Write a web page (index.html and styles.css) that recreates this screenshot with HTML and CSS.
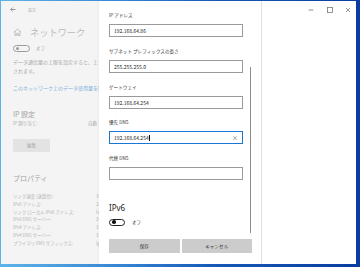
FILE: index.html
```html
<!DOCTYPE html>
<html lang="ja">
<head>
<meta charset="utf-8">
<link rel="stylesheet" href="styles.css">
</head>
<body>
<div class="window">
  <div class="main">
    <div class="titlebar">
      <svg class="back" width="6" height="5" viewBox="0 0 6 5"><path d="M5.5 2.5H0.8M2.6 0.6L0.7 2.5L2.6 4.4" fill="none" stroke="#8a8a8a" stroke-width="0.9"/></svg>
      <span class="app">設定</span>
    </div>
    <div class="page-heading">
      <svg class="home" width="9" height="8" viewBox="0 0 9 8"><path d="M1 4.2L4.5 1L8 4.2M2 3.4V7.5H3.8V5.3H5.2V7.5H7V3.4" fill="none" stroke="#a6a6a6" stroke-width="0.7"/></svg>
      <h1>ネットワーク</h1>
    </div>
    <div class="toggle-row faded">
      <span class="toggle"><span class="knob"></span></span><span class="toggle-label">オフ</span>
    </div>
    <p class="desc">データ通信量の上限を設定すると、上<br>されます。</p>
    <p class="link">このネットワーク上のデータ使用量を制</p>
    <h2 class="section">IP 設定</h2>
    <div class="ip-row"><span>IP 割り当て:</span><span class="val">自動</span></div>
    <div class="edit-btn">編集</div>
    <h2 class="section props-title">プロパティ</h2>
    <div class="props">
      <span>リンク速度 (送受信):</span><span>1000</span>
      <span>IPv6 アドレス:</span><span>2405</span>
      <span>リンク ローカル IPv6 アドレス:</span><span>fe80:</span>
      <span>IPv6 DNS サーバー:</span><span>2405</span>
      <span>IPv4 アドレス:</span><span>192.1</span>
      <span>IPv4 DNS サーバー:</span><span>192.1</span>
      <span>プライマリ DNS サフィックス:</span><span>ipent</span>
    </div>
  </div>

  <div class="dialog">
    <div class="scrollbar"></div>
    <div class="fields">
      <div class="field">
        <label>IP アドレス</label>
        <div class="input">192.168.64.86</div>
      </div>
      <div class="field">
        <label>サブネット プレフィックスの長さ</label>
        <div class="input">255.255.255.0</div>
      </div>
      <div class="field">
        <label>ゲートウェイ</label>
        <div class="input">192.168.64.254</div>
      </div>
      <div class="field">
        <label>優先 DNS</label>
        <div class="input focused"><span>192.168.64.254</span><span class="caret"></span><span class="clear">×</span></div>
      </div>
      <div class="field">
        <label>代替 DNS</label>
        <div class="input"></div>
      </div>
    </div>
    <h3 class="ipv6">IPv6</h3>
    <div class="toggle-row dark">
      <span class="toggle"><span class="knob"></span></span><span class="toggle-label">オフ</span>
    </div>
    <div class="actions">
      <div class="btn">保存</div>
      <div class="btn">キャンセル</div>
    </div>
  </div>

  <div class="side">
    <div class="controls">
      <span class="ctl"><svg width="6" height="6" viewBox="0 0 6 6"><path d="M0.5 3H5.5" stroke="#777" stroke-width="0.8"/></svg></span>
      <span class="ctl"><svg width="6" height="6" viewBox="0 0 6 6"><rect x="0.5" y="0.5" width="5" height="5" fill="none" stroke="#777" stroke-width="0.8"/></svg></span>
      <span class="ctl close"><svg width="6" height="6" viewBox="0 0 6 6"><path d="M1 1L5 5M5 1L1 5" stroke="#777" stroke-width="0.8"/></svg></span>
    </div>
  </div>
</div>
</body>
</html>
```

FILE: styles.css
```css
* { box-sizing: border-box; margin: 0; padding: 0; }
html, body { height: 100%; }
body {
  background: linear-gradient(90deg, #5db3e8 0%, #3a8ad6 30%, #1558b8 60%, #0a3ca2 100%);
  font-family: "Noto Sans CJK JP", "Noto Sans", sans-serif;
  padding: 1px 4px 3px 1px;
  overflow: hidden;
}
.window {
  width: 355px;
  height: 263px;
  display: flex;
  overflow: hidden;
}
.main {
  width: 98px;
  flex: none;
  background: #f4f4f4;
  color: #a9a9a9;
  overflow: hidden;
  white-space: nowrap;
}
.main > * { margin-left: 12px; }
.titlebar {
  height: 17px;
  display: flex;
  align-items: center;
  gap: 12px;
  margin-left: 9px !important;
}
.app { font-size: 4px; color: #b0b0b0; }
.page-heading {
  margin-top: 7px;
  height: 14px;
  display: flex;
  align-items: center;
  gap: 8px;
}
.page-heading h1 {
  font-size: 9.5px;
  font-weight: 300;
  color: #a0a0a0;
  letter-spacing: -0.3px;
  line-height: 14px;
}
.toggle-row {
  margin-top: 5px;
  height: 8px;
  display: flex;
  align-items: center;
  gap: 6px;
}
.toggle {
  width: 17px;
  height: 7px;
  border: 1px solid #9c9c9c;
  border-radius: 4px;
  display: flex;
  align-items: center;
  padding-left: 2px;
}
.knob { width: 3px; height: 3px; border-radius: 50%; background: #9c9c9c; }
.toggle-label { font-size: 4.5px; line-height: 8px; }
.desc {
  margin-top: 5px;
  font-size: 5px;
  line-height: 9px;
}
.link {
  margin-top: 8px;
  font-size: 5px;
  line-height: 9px;
  color: #7fb0e0;
}
.section {
  margin-top: 17px;
  font-size: 7px;
  font-weight: 400;
  line-height: 10px;
  color: #a4a4a4;
}
.ip-row {
  height: 8px;
  font-size: 4.5px;
  line-height: 8px;
  display: flex;
}
.ip-row span:first-child { width: 75px; flex: none; }
.edit-btn {
  margin-top: 12px;
  width: 37px;
  height: 13px;
  background: #e3e3e3;
  font-size: 4.5px;
  line-height: 13px;
  text-align: center;
  color: #a8a8a8;
}
.props-title { margin-top: 21px; }
.props {
  margin-top: 10px;
  display: grid;
  grid-template-columns: 83px auto;
  grid-auto-rows: 7.8px;
  font-size: 4.4px;
  line-height: 7.8px;
  color: #b2b2b2;
}
.dialog {
  position: relative;
  flex: none;
  width: 163px;
  background: #fff;
  border-right: 1px solid #e0e0e0;
  box-shadow: -1px 0 2px rgba(0,0,0,0.04);
  padding: 10px 9px 11px 10px;
  display: flex;
  flex-direction: column;
  color: #333;
}
.scrollbar {
  position: absolute;
  right: 10px;
  top: 66px;
  width: 1.5px;
  height: 166px;
  background: #8c8c8c;
}
.fields {
  display: flex;
  flex-direction: column;
  gap: 9.75px;
}
.field label {
  display: block;
  font-size: 4.6px;
  line-height: 8px;
  color: #333;
}
.input {
  margin-top: 5px;
  width: 134px;
  height: 13px;
  border: 1px solid #9a9a9a;
  font-size: 5px;
  line-height: 11px;
  padding-left: 4px;
  color: #222;
  display: flex;
  align-items: center;
}
.input.focused { border-color: #1a78d4; }
.caret { width: 0.6px; height: 6px; background: #111; margin-left: 0.5px; }
.clear { margin-left: auto; margin-right: 4px; font-size: 6px; color: #555; }
.ipv6 {
  margin-top: 23px;
  font-size: 8px;
  font-weight: 400;
  line-height: 10px;
  color: #222;
  font-family: "Noto Sans", "Noto Sans CJK JP", sans-serif;
}
.toggle-row.dark { margin-top: 5px; gap: 7px; }
.toggle-row.dark .toggle { width: 16px; border-color: #222; }
.toggle-row.dark .knob { background: #111; width: 3.5px; height: 3.5px; }
.toggle-row.dark .toggle-label { color: #444; }
.actions {
  margin-top: auto;
  display: flex;
  gap: 2px;
}
.btn {
  flex: 1;
  height: 14px;
  background: #cccccc;
  font-size: 4.6px;
  line-height: 14px;
  text-align: center;
  color: #333;
}
.side {
  flex: 1;
  background: #fff;
}
.controls {
  height: 17px;
  display: flex;
  justify-content: flex-end;
}
.ctl {
  width: 19px;
  height: 17px;
  display: flex;
  align-items: center;
  justify-content: center;
}
.ctl.close { width: 17px; }
```
